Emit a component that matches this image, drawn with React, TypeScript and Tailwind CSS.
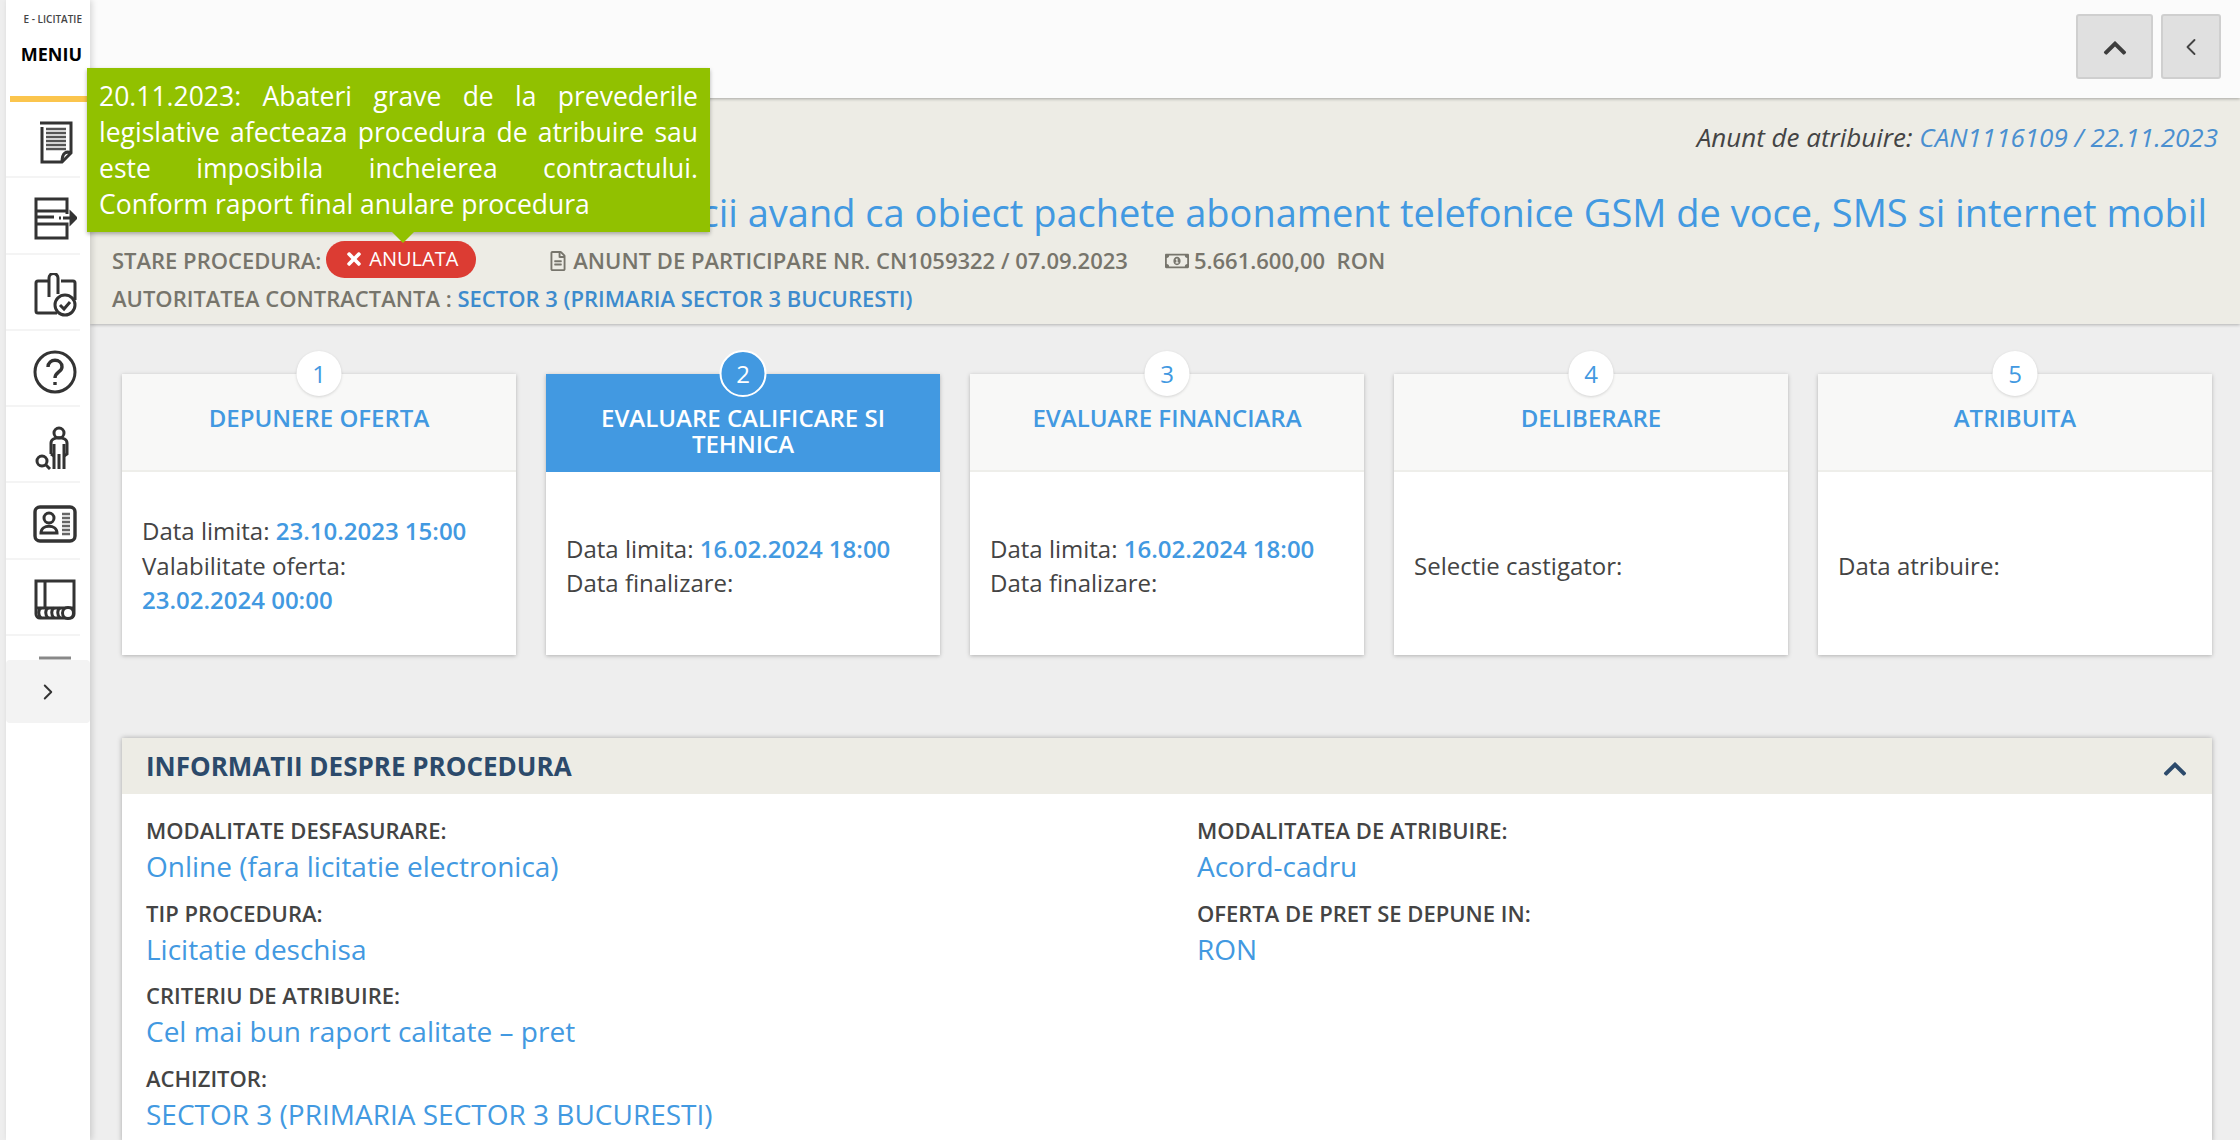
import React from 'react';
import { ChevronLeft, ChevronRight } from 'lucide-react';
import { FaChevronUp, FaRegFileAlt, FaRegMoneyBillAlt, FaTimes } from 'react-icons/fa';

const ICON_PROPS = {
  width: 44,
  height: 44,
  viewBox: '0 0 44 44',
  fill: 'none',
  stroke: '#333',
  strokeWidth: 3,
};

const MENU_ICONS: React.ReactNode[] = [
  <svg key="doc" {...ICON_PROPS}>
    <path d="M7 2h31v30l-9 9H9V6" />
    <path d="M38 32c-4-2-9-1-9 9" />
    <path d="M13 8h20M13 12h20M13 16h20M13 20h20M13 24h20M13 28h20" strokeWidth={2.4} stroke="#555" />
  </svg>,
  <svg key="list" {...ICON_PROPS}>
    <path d="M3 2h31v12H3zM3 14v13h22M3 27v14h31V27H3M34 14v3" />
    <path d="M3 20h18M26 21h2M30 21h8" />
    <path d="M38 16l5 5-5 5z" fill="#333" />
  </svg>,
  <svg key="book" {...ICON_PROPS}>
    <path d="M15 8H5a2 2 0 0 0-2 2v28a2 2 0 0 0 2 2h19" />
    <path d="M28 8h12a2 2 0 0 1 2 2v17" />
    <path d="M16 24V5a4 4 0 0 1 9 0v16" />
    <circle cx="32" cy="32" r="10" />
    <path d="M27 32l4 4 6-7" />
  </svg>,
  <svg key="help" {...ICON_PROPS}>
    <circle cx="22" cy="22" r="20" />
    <path d="M15 17c0-9 14-9 14 0 0 5-7 5-7 11" strokeWidth={3.4} />
    <path d="M22 32v3" strokeWidth={3.4} />
  </svg>,
  <svg key="person" {...ICON_PROPS}>
    <circle cx="26" cy="7" r="5" />
    <path d="M18 28V17c0-7 16-7 16 0v11l-3 2M18 28l3 2" />
    <path d="M21 18v25M26 28v15M31 18v25" />
    <circle cx="9" cy="35" r="5" />
    <path d="M13 39l4 4" />
  </svg>,
  <svg key="card" {...ICON_PROPS}>
    <rect x="2" y="5" width="40" height="34" rx="5" strokeWidth={3.4} />
    <circle cx="16" cy="16" r="5" />
    <path d="M8 31c0-9 16-9 16 0z" />
    <path d="M29 12h8M29 16h8M29 20h8M29 24h8M29 28h8M29 32h8" stroke="#666" strokeWidth={2.4} />
  </svg>,
  <svg key="shelf" {...ICON_PROPS}>
    <path d="M3 3h38v33a4 4 0 0 1-4 4H7a4 4 0 0 1-4-4z" />
    <path d="M12 3v27M3 30h38" />
    <path d="M8 40c-3-3-3-8 0-10M15 40c-3-3-3-8 0-10M21 40c-3-3-3-8 0-10M27 40c-3-3-3-8 0-10" />
    <circle cx="35" cy="35" r="5.5" fill="#fff" />
  </svg>,
  <svg key="more" {...ICON_PROPS}>
    <path d="M6 3h32" stroke="#888" />
  </svg>,
];

const STEPS = [
  {
    nr: 1,
    title: 'DEPUNERE OFERTA',
    lines: [
      <>Data limita: <b className="font-semibold text-[#4299e1]">23.10.2023 15:00</b></>,
      <>Valabilitate oferta:</>,
      <b className="font-semibold text-[#4299e1]">23.02.2024 00:00</b>,
    ],
  },
  {
    nr: 2,
    title: 'EVALUARE CALIFICARE SI TEHNICA',
    active: true,
    lines: [
      <>Data limita: <b className="font-semibold text-[#4299e1]">16.02.2024 18:00</b></>,
      <>Data finalizare:</>,
    ],
  },
  {
    nr: 3,
    title: 'EVALUARE FINANCIARA',
    lines: [
      <>Data limita: <b className="font-semibold text-[#4299e1]">16.02.2024 18:00</b></>,
      <>Data finalizare:</>,
    ],
  },
  { nr: 4, title: 'DELIBERARE', lines: [<>Selectie castigator:</>] },
  { nr: 5, title: 'ATRIBUITA', lines: [<>Data atribuire:</>] },
];

const LEFT_INFO = [
  ['MODALITATE DESFASURARE:', 'Online (fara licitatie electronica)'],
  ['TIP PROCEDURA:', 'Licitatie deschisa'],
  ['CRITERIU DE ATRIBUIRE:', 'Cel mai bun raport calitate – pret'],
  ['ACHIZITOR:', 'SECTOR 3 (PRIMARIA SECTOR 3 BUCURESTI)'],
];

const RIGHT_INFO = [
  ['MODALITATEA DE ATRIBUIRE:', 'Acord-cadru'],
  ['OFERTA DE PRET SE DEPUNE IN:', 'RON'],
];

const InfoItem = ({ label, value }: { label: string; value: string }) => (
  <div className="h-[82.6px]">
    <div className="h-[35px] text-[22px] leading-[36px] font-semibold text-[#444]">{label}</div>
    <div className="text-[28px] leading-[38px] text-[#4299e1] whitespace-nowrap">{value}</div>
  </div>
);

export default function App() {
  return (
    <div className="relative flex h-[1140px] w-[2240px] overflow-hidden bg-[#eeeeee] font-['Open_Sans',sans-serif] text-[#444]">
      {/* Sidebar */}
      <aside className="ml-[6px] w-[84px] shrink-0 bg-white shadow-[2px_0_6px_rgba(0,0,0,0.15)] z-10">
        <div className="h-[96px] pt-[11px] pr-[8px] text-right text-black">
          <div className="text-[10px] leading-[16px] font-semibold text-[#444]">E - LICITATIE</div>
          <div className="mt-[15px] text-[18px] leading-[24px] font-bold">MENIU</div>
        </div>
        <div className="ml-[4px] h-[6px] bg-[#fbc54d]" />
        <div className="h-[558px] overflow-hidden">
          {MENU_ICONS.map((icon, i) => (
            <div
              key={i}
              className="mr-[10px] flex h-[76.3px] items-center justify-end border-b-2 border-[#f4f4f4] pt-[7px] pr-[3px]"
            >
              {icon}
            </div>
          ))}
        </div>
        <div className="flex h-[63px] items-center justify-center rounded-sm bg-[#f3f3f3]">
          <ChevronRight size={26} strokeWidth={1.8} color="#333" />
        </div>
      </aside>

      <main className="min-w-0 flex-1">
        {/* Top bar */}
        <header className="relative z-[1] flex h-[98px] items-start justify-end gap-[8px] bg-[#fbfbfb] pt-[14px] pr-[19px] shadow-[0_1px_3px_rgba(0,0,0,0.3)]">
          <button className="flex h-[65px] w-[77px] items-center justify-center rounded-[3px] border-2 border-[#cfcfcf] bg-[#e0e0e0]">
            <FaChevronUp size={26} color="#3d3d3d" className="mt-[3px]" />
          </button>
          <button className="flex h-[65px] w-[60px] items-center justify-center rounded-[3px] border-2 border-[#cfcfcf] bg-[#e0e0e0]">
            <ChevronLeft size={28} strokeWidth={1.6} color="#444" />
          </button>
        </header>

        {/* Procedure heading */}
        <section className="h-[226px] bg-[#edece5] pl-[22px] pr-[22px] shadow-[0_1px_3px_rgba(0,0,0,0.25)]">
          <div className="pt-[21px] text-right text-[26px] leading-[36px] text-[#444] italic">
            Anunt de atribuire: <span className="text-[#4a8fd0]">CAN1116109 / 22.11.2023</span>
          </div>
          <h1 className="mt-[30px] whitespace-nowrap pr-[11px] text-right text-[38px] leading-[54px] font-normal text-[#4299e1]">
            Achizitie servicii avand ca obiect pachete abonament telefonice GSM de voce, SMS si internet mobil
          </h1>
          <div className="mt-[3px] flex h-[37px] items-center text-[22px] font-semibold text-[#77756c]">
            <span>STARE PROCEDURA:</span>
            <span className="ml-[5px] mt-[-3px] flex h-[37px] w-[150px] items-center justify-center gap-[5px] rounded-full bg-[#dc3c33] text-[20px] font-normal text-white">
              <FaTimes size={20} />
              ANULATA
            </span>
            <FaRegFileAlt size={20} className="ml-[72px] mr-[5px]" />
            <span>ANUNT DE PARTICIPARE NR. CN1059322 / 07.09.2023</span>
            <FaRegMoneyBillAlt size={24} className="ml-[37px] mr-[5px]" />
            <span className="whitespace-pre">5.661.600,00  RON</span>
          </div>
          <div className="mt-[1px] text-[22px] leading-[36px] font-semibold text-[#77756c]">
            AUTORITATEA CONTRACTANTA : <span className="text-[#3d8bcd]">SECTOR 3 (PRIMARIA SECTOR 3 BUCURESTI)</span>
          </div>
        </section>

        <div className="pt-[50px] pl-[32px] pr-[28px]">
          {/* Steps */}
          <div className="grid grid-cols-5 gap-[30px]">
            {STEPS.map((step) => (
              <div key={step.nr} className="relative h-[281px] bg-white shadow-[0_1px_4px_rgba(0,0,0,0.25)]">
                <div
                  className={
                    step.active
                      ? 'absolute left-1/2 top-[-24px] flex h-[47px] w-[47px] -translate-x-1/2 items-center justify-center rounded-full border-2 border-white bg-[#4299e1] text-[24px] text-white'
                      : 'absolute left-1/2 top-[-23px] flex h-[45px] w-[45px] -translate-x-1/2 items-center justify-center rounded-full bg-white text-[24px] text-[#4299e1] shadow-[0_1px_3px_rgba(0,0,0,0.15)]'
                  }
                >
                  {step.nr}
                </div>
                <div
                  className={
                    step.active
                      ? 'h-[98px] bg-[#4299e1] px-[40px] pt-[31px] text-center text-[24px] leading-[26px] font-semibold text-white'
                      : 'h-[98px] border-b-2 border-[#eeeeea] bg-[#f8f8f7] px-[40px] pt-[31px] text-center text-[24px] leading-[26px] font-semibold text-[#4299e1]'
                  }
                >
                  {step.title}
                </div>
                <div className="flex h-[183px] flex-col justify-center px-[20px] pt-[5px] text-[24px] leading-[34.5px] text-[#444]">
                  {step.lines.map((line, i) => (
                    <div key={i}>{line}</div>
                  ))}
                </div>
              </div>
            ))}
          </div>

          {/* Procedure info */}
          <section className="mt-[83px] bg-white shadow-[0_0_5px_rgba(0,0,0,0.3)]">
            <div className="flex h-[56px] items-center justify-between bg-[#edece5] pl-[24px] pr-[24px]">
              <h2 className="text-[26px] font-bold text-[#2c4a6b]">INFORMATII DESPRE PROCEDURA</h2>
              <FaChevronUp size={26} color="#2c4a6b" className="mt-[6px]" />
            </div>
            <div className="grid grid-cols-[1051px_1fr] pt-[18px] pl-[24px]">
              <div>
                {LEFT_INFO.map(([label, value]) => (
                  <InfoItem key={label} label={label} value={value} />
                ))}
              </div>
              <div>
                {RIGHT_INFO.map(([label, value]) => (
                  <InfoItem key={label} label={label} value={value} />
                ))}
              </div>
            </div>
          </section>
        </div>
      </main>

      {/* Cancellation tooltip */}
      <div className="absolute left-[87px] top-[68px] z-20 w-[623px] bg-[#91c100] px-[12px] py-[10px] text-justify text-[26.5px] leading-[36px] text-white shadow-[0_2px_4px_rgba(0,0,0,0.3)]">
        20.11.2023: Abateri grave de la prevederile legislative afecteaza procedura de atribuire sau este imposibila incheierea contractului. Conform raport final anulare procedura
        <span className="absolute left-[305px] top-full h-0 w-0 border-x-[11px] border-t-[11px] border-x-transparent border-t-[#91c100]" />
      </div>
    </div>
  );
}
